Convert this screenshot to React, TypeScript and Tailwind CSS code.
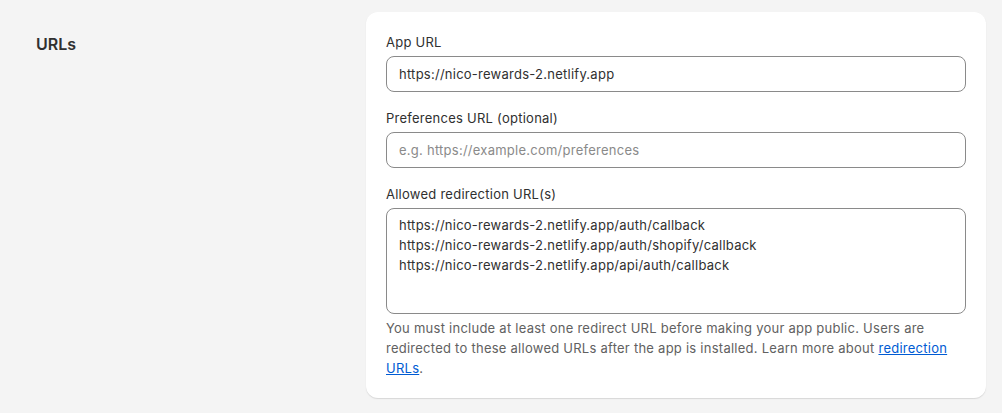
import React from 'react';

const font = { fontFamily: 'Inter, "Noto Sans", sans-serif' };

const Label: React.FC<{ children: React.ReactNode }> = ({ children }) => (
  <label className="block text-[13px] tracking-[0.25px] leading-5 text-[#303030] mb-1">{children}</label>
);

export default function App() {
  return (
    <div className="min-h-screen bg-[#f4f4f4] antialiased" style={font}>
      <div className="flex pt-3 pl-9">
        {/* Section title */}
        <div className="w-[330px] shrink-0 pt-[22px]">
          <h2 className="text-[16px] leading-5 font-semibold text-[#303030]">URLs</h2>
        </div>

        {/* Card */}
        <div className="w-[620px] bg-white rounded-xl shadow-[0_1px_0_0_rgba(26,26,26,0.07),0_1px_2px_rgba(0,0,0,0.06)] p-5">
          <div className="mb-4">
            <Label>App URL</Label>
            <input
              type="text"
              defaultValue="https://nico-rewards-2.netlify.app"
              className="w-full h-9 px-3 text-[13px] tracking-[0.25px] text-[#303030] border border-[#8a8a8a] rounded-lg outline-none bg-white"
            />
          </div>

          <div className="mb-4">
            <Label>Preferences URL (optional)</Label>
            <input
              type="text"
              placeholder="e.g. https://example.com/preferences"
              className="w-full h-9 px-3 text-[13px] tracking-[0.25px] text-[#303030] placeholder:text-[#8a8a8a] border border-[#8a8a8a] rounded-lg outline-none bg-white"
            />
          </div>

          <div>
            <Label>Allowed redirection URL(s)</Label>
            <textarea
              defaultValue={
                'https://nico-rewards-2.netlify.app/auth/callback\nhttps://nico-rewards-2.netlify.app/auth/shopify/callback\nhttps://nico-rewards-2.netlify.app/api/auth/callback'
              }
              className="block w-full h-[106px] px-3 py-[6px] text-[13px] tracking-[0.25px] leading-5 text-[#303030] border border-[#8a8a8a] rounded-lg outline-none resize-none bg-white"
            />
            <p className="mt-1 text-[13px] tracking-[0.25px] leading-5 text-[#616161]">
              You must include at least one redirect URL before making your app public. Users are
              redirected to these allowed URLs after the app is installed. Learn more about{' '}
              <a href="#" className="text-[#005bd3] underline">
                redirection URLs
              </a>
              .
            </p>
          </div>
        </div>
      </div>
    </div>
  );
}
